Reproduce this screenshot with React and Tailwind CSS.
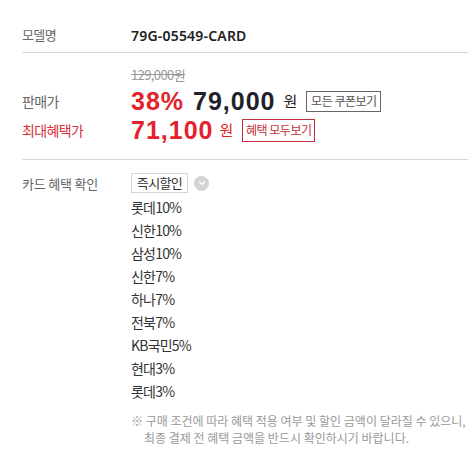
export default function App() {
  const cards = ["롯데10%", "신한10%", "삼성10%", "신한7%", "하나7%", "전북7%", "KB국민5%", "현대3%", "롯데3%"];
  const num = { fontFamily: '"Noto Sans", "Liberation Sans", sans-serif' };
  const big = { fontFamily: '"Liberation Sans", Arial, sans-serif' };
  return (
    <div className="w-[473px] h-[449px] bg-white overflow-hidden pl-[22px] pr-[5px]" style={{ fontFamily: '"Noto Sans CJK KR", "Noto Sans", sans-serif' }}>
      {/* row 1 */}
      <div className="h-[53px] pt-[18px] flex items-center border-b border-[#d9d9d9]">
        <div className="w-[109px] text-[13px] text-[#666] tracking-[-0.6px]">모델명</div>
        <div className="text-[14px] font-semibold text-[#222] tracking-[0.2px]" style={num}>79G-05549-CARD</div>
      </div>
      {/* row 2 */}
      <div className="h-[107px] pt-[13px] border-b border-[#d9d9d9]">
        <div className="pl-[109px] h-[18px] flex items-center text-[13px] text-[#999] line-through tracking-[-0.6px]">129,000원</div>
        <div className="mt-[2px] h-[30px] flex items-center">
          <div className="w-[109px] text-[14px] text-[#666] tracking-[-0.6px]">판매가</div>
          <span className="text-[25px] font-bold text-[#e3222b] leading-none tracking-[1px]" style={big}>38%</span>
          <span className="ml-[9px] text-[25px] font-bold text-[#1e232b] leading-none tracking-[1px]" style={big}>79,000</span>
          <span className="ml-[8px] text-[15px] text-[#222] leading-[20px]">원</span>
          <span className="ml-[9px] h-[21px] w-[75px] border border-[#666] flex items-center justify-center text-[12px] text-[#555] tracking-[-0.5px]">모든 쿠폰보기</span>
        </div>
        <div className="h-[28px] flex items-center">
          <div className="w-[109px] text-[14px] text-[#d9303b] tracking-[-0.6px]">최대혜택가</div>
          <span className="text-[25px] font-bold text-[#e3222b] leading-none tracking-[1px]" style={big}>71,100</span>
          <span className="ml-[6px] text-[15px] text-[#e3222b] leading-[20px]">원</span>
          <span className="ml-[9px] h-[23px] w-[73px] border border-[#c3303a] flex items-center justify-center text-[12px] text-[#c3303a] tracking-[-0.5px]">혜택 모두보기</span>
        </div>
      </div>
      {/* row 3 */}
      <div className="pt-[13px] flex">
        <div className="w-[109px] pt-[1px] text-[13px] text-[#666] tracking-[-0.2px] leading-[20px]">카드 혜택 확인</div>
        <div>
          <div className="flex items-center">
            <span className="h-[20px] w-[57px] border border-[#d5d5d5] flex items-center justify-center text-[13px] text-[#333] tracking-[-0.6px]">즉시할인</span>
            <span className="ml-[6px] w-[15px] h-[15px] rounded-full bg-[#d3d3d3] flex items-center justify-center">
              <svg width="8" height="6" viewBox="0 0 8 6"><path d="M1 1.5 L4 4.5 L7 1.5" fill="none" stroke="#fff" strokeWidth="1.5" /></svg>
            </span>
          </div>
          <div className="mt-[3px]">
            {cards.map((c, i) => (
              <div key={i} className="h-[23px] flex items-center text-[14px] text-[#333] tracking-[-0.8px]">{c}</div>
            ))}
          </div>
          <div className="mt-[9px] text-[12px] text-[#999] leading-[17px] whitespace-nowrap">
            <div>※ 구매 조건에 따라 혜택 적용 여부 및 할인 금액이 달라질 수 있으니,</div>
            <div className="pl-[13px]">최종 결제 전 혜택 금액을 반드시 확인하시기 바랍니다.</div>
          </div>
        </div>
      </div>
    </div>
  );
}
